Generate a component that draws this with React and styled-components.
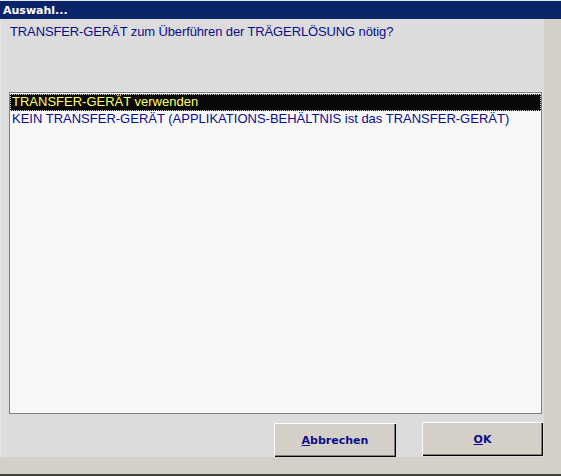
import styled, { createGlobalStyle } from "styled-components";

const GlobalStyle = createGlobalStyle`
  body {
    margin: 0;
    background: #d4d0c8;
  }
  #root {
    width: 561px;
    height: 476px;
  }
`;

const StWindow = styled.div`
  display: flex;
  flex-direction: column;
  width: 561px;
  height: 476px;
  box-sizing: border-box;
  background-color: #d4d0c8;
  border-top: 1px solid #e8e8e8;
  border-bottom: 2px solid #404040;
`;

const StTitleBar = styled.div`
  display: flex;
  align-items: center;
  height: 18px;
  padding-left: 3px;
  background-color: #0a246a;
  color: #ffffff;
  font-family: "DejaVu Sans", sans-serif;
  font-size: 11px;
  font-weight: bold;
`;

const StBody = styled.div`
  display: flex;
  flex: 1;
  min-height: 0;
`;

const StPanel = styled.div`
  display: flex;
  flex-direction: column;
  width: 544px;
  height: 438px;
  box-sizing: border-box;
  padding: 0 2px 0 8px;
  background-color: #dcdcdc;
  border-left: 1px solid #e6e6e6;
`;

const StQuestion = styled.div`
  height: 73px;
  padding: 5px 0 0 1px;
  box-sizing: border-box;
  color: #0c0c8c;
  font-family: "Liberation Sans", Arial, sans-serif;
  font-size: 13px;
  line-height: 16px;
  letter-spacing: -0.12px;
`;

const StListBox = styled.div`
  display: flex;
  flex-direction: column;
  height: 322px;
  box-sizing: border-box;
  padding: 1px 0 0 0;
  background-color: #f7f7f7;
  border: 1px solid #808080;
`;

const StListItem = styled.div`
  height: 17px;
  padding-left: 2px;
  box-sizing: border-box;
  font-family: "Liberation Sans", Arial, sans-serif;
  font-size: 13px;
  line-height: 16px;
  white-space: nowrap;
  color: ${(p) => (p.$selected ? "#ffff66" : "#0c0c8c")};
  background-color: ${(p) => (p.$selected ? "#080808" : "transparent")};
  outline: ${(p) => (p.$selected ? "1px dotted #d0d0d0" : "none")};
  outline-offset: -1px;
`;

const StButtonRow = styled.div`
  display: flex;
  justify-content: flex-end;
  align-items: flex-end;
  gap: 26px;
  flex: 1;
  margin-right: -1px;
`;

const StButton = styled.button`
  display: flex;
  align-items: center;
  justify-content: center;
  width: ${(p) => p.$width}px;
  height: 34px;
  margin: 0 0 ${(p) => p.$lift}px 0;
  padding: 0;
  border: none;
  background-color: #d4d0c8;
  box-shadow: inset 1px 1px 0 #ffffff, inset -1px -1px 0 #000000,
    inset -2px -2px 0 #808080;
  color: #0c0c8c;
  font-family: "DejaVu Sans", sans-serif;
  font-size: 11px;
  font-weight: bold;
  cursor: pointer;
  u {
    text-decoration: underline;
  }
`;

const StSideStripe = styled.div`
  flex: 1;
  background-color: #d4d0c8;
`;

const items = [
  "TRANSFER-GERÄT verwenden",
  "KEIN TRANSFER-GERÄT (APPLIKATIONS-BEHÄLTNIS ist das TRANSFER-GERÄT)",
];

const App = () => {
  return (
    <>
      <GlobalStyle />
      <StWindow>
        <StTitleBar>Auswahl...</StTitleBar>
        <StBody>
          <StPanel>
            <StQuestion>TRANSFER-GERÄT zum Überführen der TRÄGERLÖSUNG nötig?</StQuestion>
            <StListBox>
              {items.map((item, i) => (
                <StListItem key={item} $selected={i === 0}>
                  {item}
                </StListItem>
              ))}
            </StListBox>
            <StButtonRow>
              <StButton $width={122} $lift={0}>
                <u>A</u>bbrechen
              </StButton>
              <StButton $width={121} $lift={1}>
                <u>O</u>K
              </StButton>
            </StButtonRow>
          </StPanel>
          <StSideStripe />
        </StBody>
      </StWindow>
    </>
  );
};

export default App;
